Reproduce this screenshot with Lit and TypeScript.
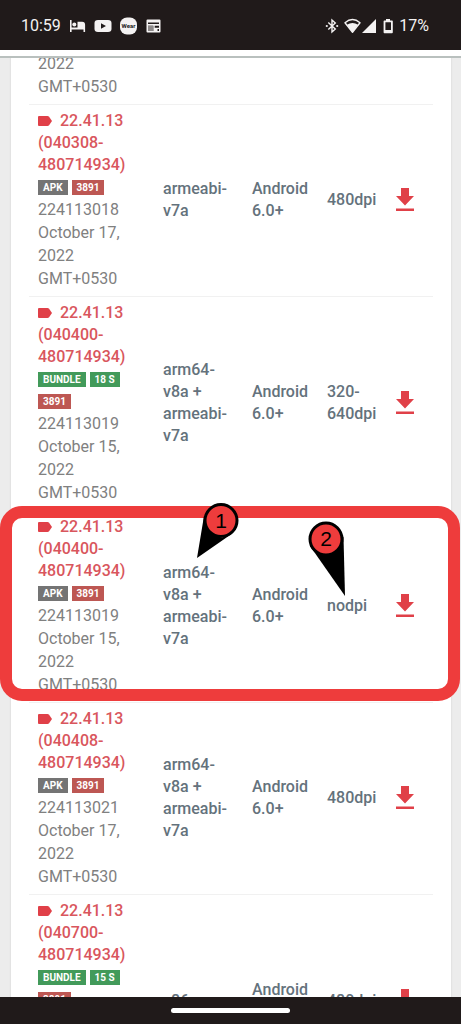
import { LitElement, html, css, svg } from "lit";
import { customElement, property } from "lit/decorators.js";

interface Badge {
  text: string;
  kind: "apk" | "bundle" | "sig";
}

interface Variant {
  build: string;
  badges: Badge[];
  code: string;
  date: string;
  arch: string;
  os: string;
  dpi: string;
}

const APK: Badge = { text: "APK", kind: "apk" };
const BUNDLE: Badge = { text: "BUNDLE", kind: "bundle" };
const SIG: Badge = { text: "3891", kind: "sig" };

const VARIANTS: Variant[] = [
  { build: "(040308-480714934)", badges: [APK, SIG], code: "224113018", date: "October 17, 2022 GMT+0530", arch: "armeabi-v7a", os: "Android 6.0+", dpi: "480dpi" },
  { build: "(040400-480714934)", badges: [BUNDLE, { text: "18 S", kind: "bundle" }, SIG], code: "224113019", date: "October 15, 2022 GMT+0530", arch: "arm64-v8a + armeabi-v7a", os: "Android 6.0+", dpi: "320-640dpi" },
  { build: "(040400-480714934)", badges: [APK, SIG], code: "224113019", date: "October 15, 2022 GMT+0530", arch: "arm64-v8a + armeabi-v7a", os: "Android 6.0+", dpi: "nodpi" },
  { build: "(040408-480714934)", badges: [APK, SIG], code: "224113021", date: "October 17, 2022 GMT+0530", arch: "arm64-v8a + armeabi-v7a", os: "Android 6.0+", dpi: "480dpi" },
  { build: "(040700-480714934)", badges: [BUNDLE, { text: "15 S", kind: "bundle" }, SIG], code: "224113022", date: "October 17, 2022 GMT+0530", arch: "x86", os: "Android 6.0+", dpi: "480dpi" },
];

@customElement("status-bar")
class StatusBar extends LitElement {
  static styles = css`
    :host {
      display: flex;
      align-items: center;
      justify-content: space-between;
      height: 50px;
      padding: 1px 32px 0 21px;
      box-sizing: border-box;
      background: #201a1a;
      color: #f4f2f2;
      font: 400 16px/20px Roboto, "Noto Sans", sans-serif;
    }
    .group {
      display: flex;
      align-items: center;
      gap: 8px;
    }
    .group.tight {
      gap: 5px;
    }
    svg {
      display: block;
      fill: currentColor;
    }
  `;

  render() {
    return html`
      <div class="group">
        <span>10:59</span>
        <svg width="17" height="18" viewBox="0 0 17 18">
          <path d="M1 3h1.6v7.4h5.900V4.800h4.600a3 3 0 0 1 3 3V15h-1.600v-2.400H2.600V15H1z" />
          <circle cx="5.3" cy="7.6" r="2" />
        </svg>
        <svg width="18" height="18" viewBox="0 0 18 18">
          <path fill-rule="evenodd" d="M4 3h10q3.500 0 3.500 3v6q0 3-3.500 3H4Q.5 15 .5 12V6Q.5 3 4 3zM7 6.200v5.600L12 9z" />
        </svg>
        <svg width="17" height="18" viewBox="0 0 17 18">
          <rect x="0" y="0.500" width="17" height="17" rx="7" />
          <text x="8.500" y="11" text-anchor="middle" font-size="6" font-weight="700" fill="#201a1a">Wear</text>
        </svg>
        <svg width="17" height="18" viewBox="0 0 17 18">
          <path fill-rule="evenodd" d="M2.500 2.500h12q1 0 1 1v11q0 1-1 1h-12q-1 0-1-1v-11q0-1 1-1zM3 5.500v1.500h11V5.500zM3 8.700v5.300h5.300V8.700zM9.700 8.700v2h4.300v-2zM12.500 12v2H14v-2z" />
          <path fill="#8d8989" d="M3 8.700h5.300V14H3z" />
        </svg>
      </div>
      <div class="group tight">
        <svg width="14" height="16" viewBox="0 0 14 16">
          <path fill="none" stroke="currentColor" stroke-width="1.400" d="M3.300 4.500l7 6.600L7 14V2l3.300 2.900-7 6.600" />
          <circle cx="1.800" cy="8" r="1.100" />
          <circle cx="12.200" cy="8" r="1.100" />
        </svg>
        <svg width="33" height="16" viewBox="0 0 33 16">
          <path fill="none" stroke="currentColor" stroke-width="1.400" stroke-linejoin="round" d="M1 4.800Q8.500-1.600 16 4.800L8.500 14.300z" />
          <path d="M3 6.800Q8.500 3 14 6.800L8.500 14.500z" />
          <path d="M32 1v14H18z" />
        </svg>
        <svg width="12" height="16" viewBox="0 0 12 16">
          <path fill-rule="evenodd" d="M4 1h4v1.500h2q.8 0 .8.800v11q0 .9-.8.900H2.400q-.8 0-.8-.9v-11q0-.8.800-.8H4zM3.400 4.300v7.700H9V4.300z" />
        </svg>
        <span>17%</span>
      </div>
    `;
  }
}

@customElement("variant-table")
class VariantTable extends LitElement {
  @property({ attribute: false }) variants: Variant[] = [];

  static styles = css`
    :host {
      display: block;
    }
    table {
      width: 100%;
      table-layout: fixed;
      border-collapse: separate;
      border-spacing: 0;
      font: 500 16px/22px Roboto, "Noto Sans", sans-serif;
      color: #64727c;
    }
    .arch-col {
      width: 89px;
    }
    .os-col {
      width: 75px;
    }
    .dpi-col {
      width: 58px;
    }
    .get-col {
      width: 57px;
    }
    td {
      padding: 5px 9px 6px;
      border-bottom: 1px solid #f1f1f1;
      vertical-align: middle;
    }
    td.dpi {
      padding-right: 0;
    }
    td.get {
      padding-left: 0;
      padding-right: 0;
    }
    a {
      color: #d9565d;
      text-decoration: none;
    }
    .version {
      display: block;
    }
    .tag {
      width: 14px;
      height: 10px;
      margin-right: 8px;
      fill: #e04048;
    }
    .badges {
      display: flex;
      flex-wrap: wrap;
      gap: 0 4px;
    }
    .slot {
      height: 22px;
      display: flex;
      align-items: center;
    }
    .badge {
      padding: 0 5px;
      color: #fff;
      font-size: 10px;
      font-weight: 700;
      line-height: 15px;
    }
    .apk {
      background: #747474;
    }
    .bundle {
      background: #429a5a;
    }
    .sig {
      background: #bd5753;
    }
    .details {
      color: #808080;
      font-weight: 400;
      line-height: 23px;
    }
    .get a {
      display: flex;
      justify-content: center;
    }
    .get svg {
      fill: #e04048;
    }
  `;

  private row(v: Variant) {
    return html`
      <tr>
        <td>
          <a class="version" href="#">
            <svg class="tag" viewBox="0 0 14 10"><path d="M1 0h8.500q1 0 1.600.8L14 5l-2.900 4.200q-.6.800-1.600.8H1q-1 0-1-1V1q0-1 1-1z" /></svg>22.41.13
            ${v.build}
          </a>
          <div class="badges">
            ${v.badges.map((b) => html`<span class="slot"><span class="badge ${b.kind}">${b.text}</span></span>`)}
          </div>
          <div class="details">
            <div>${v.code}</div>
            <div>${v.date}</div>
          </div>
        </td>
        <td>${v.arch}</td>
        <td>${v.os}</td>
        <td class="dpi">${v.dpi}</td>
        <td class="get">
          <a href="#" aria-label="Download">
            <svg width="18" height="24" viewBox="0 0 18 24"><path d="M5 0h8v8h5l-9 9.500L0 8h5zM0 20.500h18V23H0z" /></svg>
          </a>
        </td>
      </tr>
    `;
  }

  render() {
    return html`
      <table>
        <colgroup>
          <col />
          <col class="arch-col" />
          <col class="os-col" />
          <col class="dpi-col" />
          <col class="get-col" />
        </colgroup>
        <tbody>
          <tr>
            <td><div class="details">2022 GMT+0530</div></td>
            <td></td>
            <td></td>
            <td></td>
            <td></td>
          </tr>
          ${this.variants.map((v) => this.row(v))}
        </tbody>
      </table>
    `;
  }
}

@customElement("app-root")
class AppRoot extends LitElement {
  static styles = css`
    :host {
      display: flex;
      flex-direction: column;
      height: 100vh;
      overflow: hidden;
      background: #ececec;
    }
    .toolbar {
      flex: none;
      height: 6px;
      background: #fff;
      border-bottom: 2px solid #b9c0be;
    }
    main {
      position: relative;
      flex: 1;
      min-height: 0;
      overflow: hidden;
    }
    .card {
      margin: 0 10px 0 11px;
      padding: 0 18px;
      background: #fff;
      box-shadow: 0 0 2px #cfcfcf;
    }
    variant-table {
      margin-top: -11px;
    }
    .highlight {
      position: absolute;
      top: 448px;
      left: 0;
      right: 1px;
      height: 195px;
      box-sizing: border-box;
      border: 12px solid #ee3c3c;
      border-radius: 22px;
    }
    .pin {
      position: absolute;
      font: 21px "Liberation Sans", sans-serif;
    }
    .pin-1 {
      left: 190px;
      top: 442px;
    }
    .pin-2 {
      left: 305px;
      top: 460px;
    }
    .nav {
      flex: none;
      display: flex;
      justify-content: center;
      align-items: center;
      height: 27px;
      background: #201a1a;
    }
    .pill {
      width: 26%;
      height: 5px;
      border-radius: 3px;
      background: #fff;
    }
  `;

  private disc(cx: number, cy: number, label: string) {
    return svg`
      <circle cx=${cx} cy=${cy} r="16" fill="#ee3c3c" stroke="#000" stroke-width="3" />
      <text x=${cx} y=${cy + 7} text-anchor="middle">${label}</text>
    `;
  }

  render() {
    return html`
      <status-bar></status-bar>
      <div class="toolbar"></div>
      <main>
        <div class="card"><variant-table .variants=${VARIANTS}></variant-table></div>
        <div class="highlight"></div>
        <svg class="pin pin-1" width="52" height="60" viewBox="0 0 52 60">
          <path d="M7 58L14 16 31 38 43 33z" />
          ${this.disc(31, 20.5, "1")}
        </svg>
        <svg class="pin pin-2" width="44" height="80" viewBox="0 0 44 80">
          <path d="M40 78L5 28l33.500-9z" />
          ${this.disc(21, 21, "2")}
        </svg>
      </main>
      <div class="nav"><div class="pill"></div></div>
    `;
  }
}
